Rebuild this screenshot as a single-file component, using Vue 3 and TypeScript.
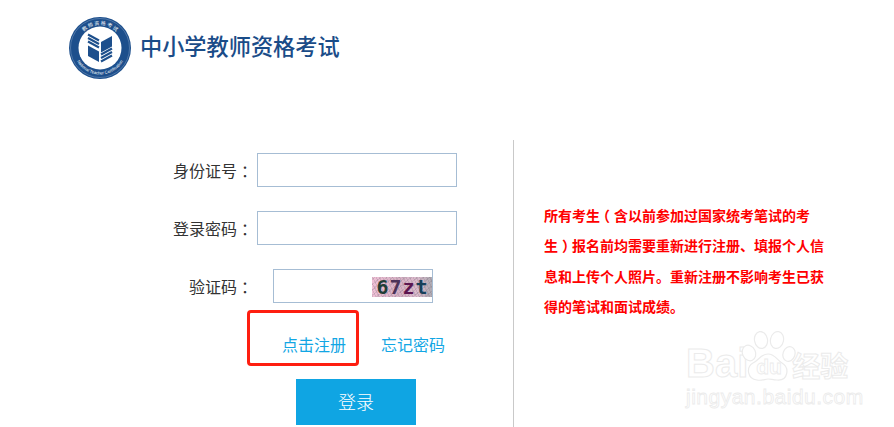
<script setup lang="ts">
const stripes: [number, number, number, number][] = [
  [19, 17.5, 30, 23.5],
  [19, 21, 30, 27],
  [19, 24.5, 30, 30.5],
  [32, 37.5, 43, 31.5],
  [32, 41, 43, 35],
  [32, 44.5, 43, 38.5],
]
</script>

<template>
  <div class="page">
    <header class="header">
      <svg class="logo" width="62" height="62" viewBox="0 0 62 62" aria-label="logo">
        <circle cx="31" cy="31" r="31" fill="#1d4f8c" />
        <circle cx="31" cy="31" r="21.5" fill="#fff" />
        <circle cx="31" cy="31" r="29.5" fill="none" stroke="#7e9dc2" stroke-width="0.5" />
        <defs>
          <path id="ring-top" d="M8 31a23 23 0 0 1 46 0" />
          <path id="ring-bottom" d="M4.5 31a26.500 26.500 0 0 0 53 0" />
        </defs>
        <text class="ring-cn" text-anchor="middle">
          <textPath href="#ring-top" startOffset="50%">教 师 资 格 考 试</textPath>
        </text>
        <text class="ring-en" text-anchor="middle">
          <textPath href="#ring-bottom" startOffset="50%">National Teacher Certification</textPath>
        </text>
        <polygon points="19,28.500 30,34.500 30,45 19,39" fill="#1d4f8c" />
        <polygon points="32,25 43,19 43,29.500 32,35.500" fill="#1d4f8c" />
        <line
          v-for="(s, i) in stripes"
          :key="i"
          :x1="s[0]"
          :y1="s[1]"
          :x2="s[2]"
          :y2="s[3]"
          stroke="#1d4f8c"
          stroke-width="2"
        />
      </svg>
      <h1 class="title">中小学教师资格考试</h1>
    </header>

    <main class="main">
      <form class="form" @submit.prevent>
        <div class="row">
          <label class="label">身份证号<span class="colon">：</span></label>
          <input class="field" type="text" />
        </div>
        <div class="row">
          <label class="label">登录密码<span class="colon">：</span></label>
          <input class="field" type="password" />
        </div>
        <div class="row">
          <label class="label">验证码<span class="colon">：</span></label>
          <div class="captcha-field">
            <input class="field short" type="text" />
            <div class="captcha">
              <span class="c1">6</span><span class="c2">7</span><span class="c3">z</span><span class="c4">t</span>
            </div>
          </div>
        </div>
        <div class="links">
          <a class="link">点击注册</a>
          <a class="link">忘记密码</a>
        </div>
        <button class="submit" type="submit">登录</button>
      </form>
      <aside class="notes">
        <p class="notice">所有考生<span class="open">（</span>含以前参加过国家统考笔试的考生<span class="close">）</span>报名前均需要重新进行注册、填报个人信息和上传个人照片。重新注册不影响考生已获得的笔试和面试成绩。</p>
      </aside>
    </main>

    <div class="mark"></div>

    <div class="watermark" aria-hidden="true">
      <div class="wm-top">
        <span class="wm-bai">Bai</span>
        <svg class="paw" width="58" height="56" viewBox="0 0 58 56">
          <g fill="#fff" stroke="#ebebeb" stroke-width="1.200">
            <ellipse cx="9" cy="22" rx="6.500" ry="8" transform="rotate(-25 9 22)" />
            <ellipse cx="21" cy="9" rx="6.500" ry="8.500" transform="rotate(-10 21 9)" />
            <ellipse cx="37" cy="9" rx="6.500" ry="8.500" transform="rotate(12 37 9)" />
            <ellipse cx="49" cy="23" rx="6" ry="7.500" transform="rotate(20 49 23)" />
            <path d="M28 23c7 0 9 6 14 9 8 5 6 18-5 17-4 0-6-1-9-1s-6 2-11 1C7 48 6 36 13 32c6-3 8-9 15-9z" />
          </g>
          <text class="wm-du" x="29" y="43" text-anchor="middle">du</text>
        </svg>
        <span class="wm-cn">经验</span>
      </div>
      <div class="wm-url">jingyan.baidu.com</div>
    </div>
  </div>
</template>

<style>
html,
body {
  margin: 0;
  background: #fff;
}
</style>

<style scoped>
.page {
  position: relative;
  width: 894px;
  height: 427px;
  overflow: hidden;
  background: #fff;
  font-family: "Noto Sans CJK SC", "Liberation Sans", sans-serif;
  color: #333;
}
.header {
  display: flex;
  align-items: center;
  gap: 9px;
  height: 62px;
  padding: 17px 0 0 69px;
}
.logo {
  flex: none;
}
.ring-cn {
  font-size: 5px;
  fill: #fff;
}
.ring-en {
  font-family: "Liberation Sans", sans-serif;
  font-size: 4.2px;
  fill: #fff;
}
.title {
  margin: 0 0 6px;
  font-size: 22.200px;
  font-weight: 500;
  line-height: 30px;
  color: #1a4c88;
  white-space: nowrap;
}
.main {
  display: flex;
  margin-top: 61px;
  height: 287px;
}
.form {
  width: 513px;
  box-sizing: border-box;
  padding-top: 13px;
}
.row {
  display: flex;
  align-items: center;
  height: 34px;
  margin-bottom: 24px;
}
.label {
  width: 253px;
  flex: none;
  text-align: right;
  font-size: 16px;
  line-height: 34px;
  color: #333;
}
.colon {
  margin-left: 4px;
  margin-right: -4px;
}
.field {
  display: block;
  box-sizing: border-box;
  width: 200px;
  height: 34px;
  margin: 0 0 0 4px;
  padding: 0 6px;
  border: 1px solid #a6bdd4;
  border-radius: 0;
  background: #fff;
  outline: none;
}
.captcha-field {
  position: relative;
  margin-left: 16px;
}
.field.short {
  width: 160px;
}
.captcha {
  position: absolute;
  left: 103px;
  top: 8px;
  display: flex;
  justify-content: center;
  align-items: center;
  gap: 1px;
  width: 60px;
  height: 20px;
  background:
    repeating-linear-gradient(63deg, rgba(120, 110, 120, 0.22) 0 1px, transparent 1px 3px),
    repeating-linear-gradient(-41deg, rgba(110, 110, 120, 0.2) 0 1px, transparent 1px 4px),
    linear-gradient(90deg, #f0c0d6 0%, #d6b0c4 45%, #dcbacd 75%, #aeaab2 100%);
  font-family: "DejaVu Sans Mono", monospace;
  font-size: 20px;
  font-weight: 700;
  line-height: 20px;
}
.c1 {
  color: #1f3d35;
}
.c2 {
  color: #4c3358;
}
.c3 {
  color: #5c1650;
}
.c4 {
  color: #17405a;
}
.links {
  display: flex;
  gap: 35px;
  height: 34px;
  padding-left: 282px;
  align-items: center;
}
.link {
  font-size: 16px;
  line-height: 24px;
  color: #12a6e4;
  cursor: pointer;
}
.submit {
  display: block;
  width: 120px;
  height: 46px;
  margin: 18px 0 0 296px;
  border: 0;
  padding: 0 0 2px;
  background: #0fa5e3;
  color: #fff;
  font-family: inherit;
  font-size: 18px;
  font-weight: 300;
}
.notes {
  flex: 1;
  border-left: 1px solid #c9c9c9;
  box-sizing: border-box;
  padding: 60px 0 0 30px;
}
.notice {
  width: 280px;
  margin: 0;
  font-size: 14px;
  font-weight: 700;
  line-height: 30.330px;
  color: #ff0000;
}
.open {
  margin-left: -4px;
  margin-right: 4px;
}
.close {
  margin-left: 4px;
  margin-right: -4px;
}
.mark {
  position: absolute;
  left: 247px;
  top: 310px;
  box-sizing: border-box;
  width: 112px;
  height: 56px;
  border: 3px solid #fe1e10;
  border-radius: 4px;
}
.watermark {
  position: absolute;
  left: 686px;
  top: 331px;
  width: 170px;
  color: #fff;
  font-family: "Liberation Sans", sans-serif;
  pointer-events: none;
}
.wm-top {
  display: flex;
  align-items: flex-end;
  height: 56px;
}
.wm-bai {
  font-size: 40px;
  font-weight: 700;
  line-height: 48px;
  -webkit-text-stroke: 1px #ebebeb;
}
.paw {
  flex: none;
  margin-left: -8px;
}
.wm-du {
  font-size: 21px;
  font-weight: 700;
  fill: #fff;
  stroke: #ebebeb;
  stroke-width: 0.800px;
}
.wm-cn {
  margin-left: -6px;
  font-family: "Noto Sans CJK SC", sans-serif;
  font-size: 28px;
  font-weight: 700;
  line-height: 44px;
  -webkit-text-stroke: 1px #ebebeb;
}
.wm-url {
  margin-top: -2px;
  font-size: 21px;
  line-height: 24px;
  letter-spacing: 0.500px;
  -webkit-text-stroke: 0.800px #ebebeb;
}
</style>
